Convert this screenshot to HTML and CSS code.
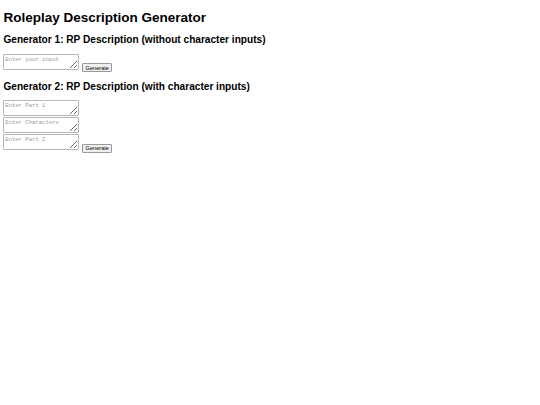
FILE: index.html
```html
<!DOCTYPE html>
<html>
<head>
<meta charset="utf-8">
<title>Roleplay Description Generator</title>
<link rel="stylesheet" href="styles.css">
</head>
<body>
<h1 class="title">Roleplay Description Generator</h1>
<h2 class="gen-title">Generator 1: RP Description (without character inputs)</h2>
<div class="gen">
<textarea class="field" placeholder="Enter your input"></textarea>
<button class="btn">Generate</button>
</div>
<h2 class="gen-title">Generator 2: RP Description (with character inputs)</h2>
<div class="gen">
<textarea class="field" placeholder="Enter Part 1"></textarea><br>
<textarea class="field" placeholder="Enter Characters"></textarea><br>
<textarea class="field" placeholder="Enter Part 2"></textarea>
<button class="btn">Generate</button>
</div>
</body>
</html>
```
FILE: styles.css
```css
body {
  margin: 3.4px;
  font-family: "Liberation Sans", Arial, sans-serif;
  font-size: 6.75px;
  background: #fff;
  color: #000;
}
.title {
  font-size: 13.5px;
  font-weight: bold;
  margin: 7px 0 9px;
}
.gen-title {
  font-size: 10.125px;
  font-weight: bold;
  margin: 8.4px 0;
}
.field {
  box-sizing: border-box;
  width: 76px;
  height: 16px;
  margin: 0;
  padding: 0.8px;
  border: 1px solid #b8b8b8;
  border-radius: 1px;
  font-family: "Liberation Mono", "Courier New", monospace;
  font-size: 5.6px;
  vertical-align: baseline;
}
.field::placeholder {
  color: #9a9a9a;
}
.btn {
  box-sizing: border-box;
  width: 30px;
  height: 9px;
  padding: 0;
  margin: 0 0 0 1px;
  border: 1px solid #9a9a9a;
  border-radius: 1px;
  background: #efefef;
  font-family: "Liberation Sans", Arial, sans-serif;
  font-size: 5.6px;
  color: #000;
}
```
